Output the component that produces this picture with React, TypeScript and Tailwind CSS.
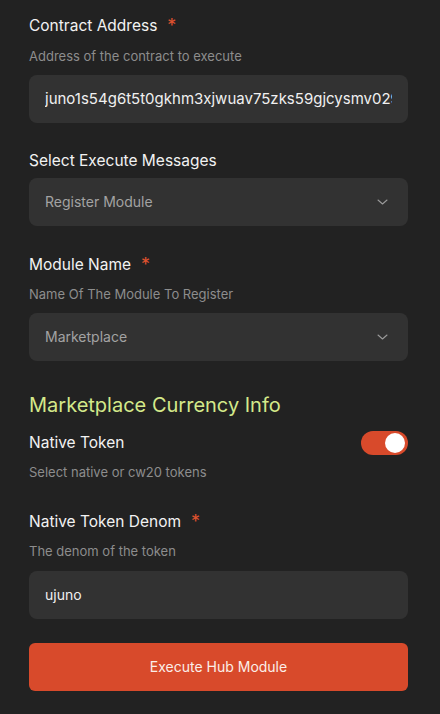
import React from 'react';

const Label = ({ children, required = false, className = "" }) => (
  <div className={`flex items-center gap-[10px] text-[15.5px] leading-6 font-normal text-[#f2f2f2] ${className}`}>
    <span>{children}</span>
    {required && <span className="text-[#e0522f] text-lg leading-6">*</span>}
  </div>
);

const Hint = ({ children, className = "" }) => (
  <p className={`text-[13px] leading-5 text-[#8d8d8d] ${className}`}>{children}</p>
);

const Chevron = () => (
  <svg width="11" height="6" viewBox="0 0 11 6" fill="none">
    <path d="M1 1l4.5 4L10 1" stroke="#9a9a9a" strokeWidth="1.1" strokeLinecap="round" strokeLinejoin="round" />
  </svg>
);

const SelectBox = ({ value, className = "" }) => (
  <div className={`h-12 rounded-lg bg-[#323232] flex items-center justify-between pl-4 pr-5 ${className}`}>
    <span className="text-sm text-[#a3a3a3]">{value}</span>
    <Chevron />
  </div>
);

const TextBox = ({ value, size = "text-sm", className = "" }) => (
  <div className={`h-12 rounded-lg bg-[#323232] flex items-center px-4 ${className}`}>
    <div className={`${size} text-[#f0f0f0] whitespace-nowrap overflow-hidden min-w-0`}>{value}</div>
  </div>
);

export default function App() {
  return (
    <div className="min-h-[714px] w-[440px] bg-[#222222] pl-[29px] pr-[32px] pt-[14px] font-['Inter',sans-serif]">
      <Label required>Contract Address</Label>
      <Hint className="mt-2">Address of the contract to execute</Hint>
      <TextBox className="mt-[9px]" size="text-[15px]" value="juno1s54g6t5t0gkhm3xjwuav75zks59gjcysmv029u" />

      <Label className="mt-[26px]">Select Execute Messages</Label>
      <SelectBox className="mt-[5px]" value="Register Module" />

      <Label required className="mt-[27px]">Module Name</Label>
      <Hint className="mt-[7px]">Name Of The Module To Register</Hint>
      <SelectBox className="mt-[9px]" value="Marketplace" />

      <h2 className="mt-[30px] text-xl leading-7 font-normal text-[#d4e98a]">Marketplace Currency Info</h2>

      <div className="mt-3 flex items-center justify-between">
        <Label>Native Token</Label>
        <div className="w-[47px] h-6 rounded-full bg-[#d84a2b] flex items-center justify-end pr-[3px]">
          <div className="w-5 h-5 rounded-full bg-white" />
        </div>
      </div>
      <Hint className="mt-[7px]">Select native or cw20 tokens</Hint>

      <Label required className="mt-[28px]">Native Token Denom</Label>
      <Hint className="mt-[7px]">The denom of the token</Hint>
      <TextBox className="mt-[10px]" value="ujuno" />

      <button className="mt-6 w-full h-12 rounded-md bg-[#d84a2b] text-sm text-[#fbeee9]">
        Execute Hub Module
      </button>
    </div>
  );
}
